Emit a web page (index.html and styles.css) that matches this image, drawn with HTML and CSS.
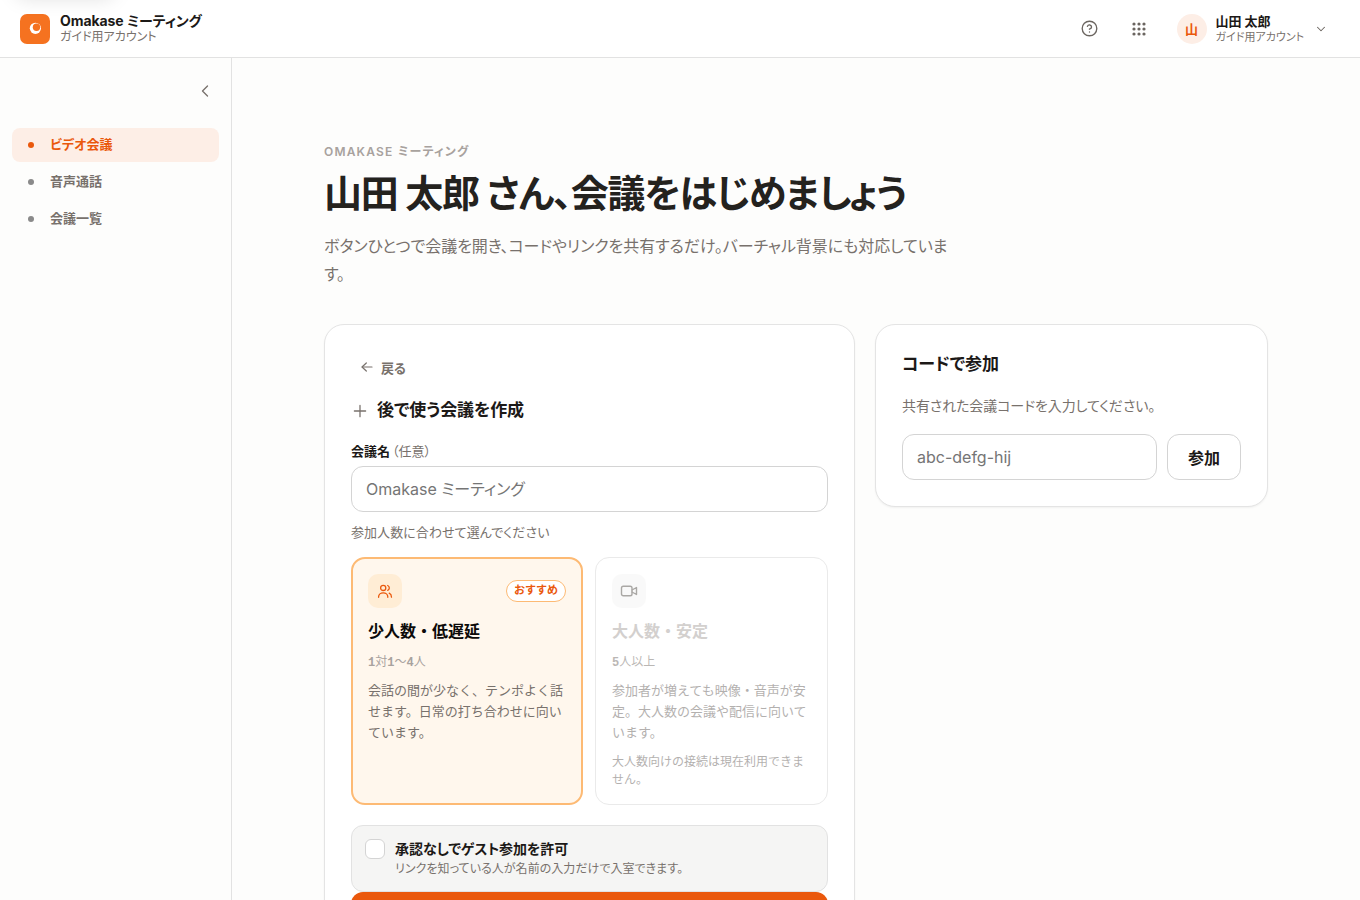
FILE: index.html
```html
<!DOCTYPE html>
<html lang="ja">
<head>
<meta charset="utf-8">
<title>Omakase ミーティング</title>
<link rel="stylesheet" href="styles.css">
</head>
<body>
<div class="app">
  <header class="topbar">
    <span class="skip-shadow"></span>
    <div class="brand">
      <svg class="brand-logo" viewBox="0 0 30 30"><rect width="30" height="30" rx="7" fill="#f57220"/><circle cx="15.4" cy="14.3" r="5.6" fill="#fff"/><circle cx="16.5" cy="13.2" r="3.7" fill="#f57220"/></svg>
      <div class="label-pair">
        <span class="label-main">Omakase ミーティング</span>
        <span class="label-sub brand-sub">ガイド用アカウント</span>
      </div>
    </div>
    <div class="tools">
      <svg class="icon-help" viewBox="0 0 24 24" fill="none" stroke="currentColor" stroke-width="1.9" stroke-linecap="round" stroke-linejoin="round"><circle cx="12" cy="12" r="10.3"/><path d="M9.09 9a3 3 0 0 1 5.83 1c0 2-3 3-3 3"/><path d="M12 17h.01"/></svg>
      <svg class="icon-grid" viewBox="0 0 14 14" fill="currentColor"><circle cx="2" cy="2" r="1.6"/><circle cx="7" cy="2" r="1.6"/><circle cx="12" cy="2" r="1.6"/><circle cx="2" cy="7" r="1.6"/><circle cx="7" cy="7" r="1.6"/><circle cx="12" cy="7" r="1.6"/><circle cx="2" cy="12" r="1.6"/><circle cx="7" cy="12" r="1.6"/><circle cx="12" cy="12" r="1.6"/></svg>
      <div class="user">
        <span class="avatar">山</span>
        <div class="label-pair user-label">
          <span class="label-main user-name">山田 太郎</span>
          <span class="label-sub">ガイド用アカウント</span>
        </div>
        <svg class="icon-down" viewBox="0 0 24 24" fill="none" stroke="currentColor" stroke-width="1.8" stroke-linecap="round" stroke-linejoin="round"><path d="m6 9 6 6 6-6"/></svg>
      </div>
    </div>
  </header>
  <div class="body">
    <aside class="sidebar">
      <svg class="icon-collapse" viewBox="0 0 24 24" fill="none" stroke="currentColor" stroke-width="1.6" stroke-linecap="round" stroke-linejoin="round"><path d="m15 18-6-6 6-6"/></svg>
      <nav class="nav">
        <a class="nav-item active"><i class="dot"></i><span class="nav-text">ビデオ会議</span></a>
        <a class="nav-item"><i class="dot"></i><span class="nav-text">音声通話</span></a>
        <a class="nav-item"><i class="dot"></i><span class="nav-text">会議一覧</span></a>
      </nav>
    </aside>
    <main class="main">
      <p class="eyebrow">Omakase ミーティング</p>
      <h1 class="title">山田 太郎 さん、会議をはじめましょう</h1>
      <p class="lead">ボタンひとつで会議を開き、コードやリンクを共有するだけ。バーチャル背景にも対応しています。</p>
      <div class="columns">
        <section class="card create">
          <a class="back"><svg class="icon-back" viewBox="0 0 24 24" fill="none" stroke="currentColor" stroke-width="1.8" stroke-linecap="round" stroke-linejoin="round"><path d="m11 18-6.500-6 6.500-6"/><path d="M19.500 12H5"/></svg>戻る</a>
          <h2 class="card-title create-title"><svg class="icon-plus" viewBox="0 0 24 24" fill="none" stroke="currentColor" stroke-width="1.7" stroke-linecap="round"><path d="M4.500 12h15M12 4.500v15"/></svg>後で使う会議を作成</h2>
          <label class="field-label">会議名<span class="optional">（任意）</span></label>
          <input class="input name-input" placeholder="Omakase ミーティング">
          <p class="hint">参加人数に合わせて選んでください</p>
          <div class="options">
            <div class="option selected">
              <div class="option-head">
                <span class="option-icon"><svg viewBox="0 0 18 18" fill="none" stroke="currentColor" stroke-width="1.3" stroke-linecap="round" stroke-linejoin="round"><circle cx="7.200" cy="5.900" r="2.600"/><path d="M2.600 15.300v-.5a4.600 4 0 0 1 9.200 0v.5"/><path d="M11.700 3.500a2.600 2.600 0 0 1 0 4.800"/><path d="M13.200 11.200c1.500.7 2.300 2 2.300 4"/></svg></span>
                <span class="badge">おすすめ</span>
              </div>
              <strong class="option-title">少人数・低遅延</strong>
              <span class="option-count"><b>1</b>対<b>1</b>〜<b>4</b>人</span>
              <span class="option-text">会話の間が少なく、テンポよく話せます。日常の打ち合わせに向いています。</span>
            </div>
            <div class="option disabled">
              <div class="option-head">
                <span class="option-icon"><svg viewBox="0 0 18 18" fill="none" stroke="currentColor" stroke-width="1.4" stroke-linecap="round" stroke-linejoin="round"><rect x="1.500" y="4.200" width="10.500" height="9.600" rx="1.800"/><path d="m12 8 4.500-2.500v7L12 10"/></svg></span>
              </div>
              <strong class="option-title">大人数・安定</strong>
              <span class="option-count"><b>5</b>人以上</span>
              <span class="option-text">参加者が増えても映像・音声が安定。大人数の会議や配信に向いています。</span>
              <span class="option-note">大人数向けの接続は現在利用できません。</span>
            </div>
          </div>
          <div class="guest">
            <span class="checkbox"></span>
            <div class="guest-copy">
              <strong class="guest-title">承認なしでゲスト参加を許可</strong>
              <span class="guest-text">リンクを知っている人が名前の入力だけで入室できます。</span>
            </div>
          </div>
          <button class="submit" aria-label="会議を作成"></button>
        </section>
        <section class="card join">
          <h2 class="card-title">コードで参加</h2>
          <p class="join-text">共有された会議コードを入力してください。</p>
          <div class="join-row">
            <input class="input" placeholder="abc-defg-hij">
            <button class="join-button">参加</button>
          </div>
        </section>
      </div>
    </main>
  </div>
</div>
</body>
</html>
```
FILE: styles.css
```css
* { box-sizing: border-box; margin: 0; padding: 0; }
body {
  font-family: Inter, "Noto Sans CJK JP", sans-serif;
  font-feature-settings: "palt";
  color: #1c1917;
  background: #fdfdfc;
}
svg { display: block; flex: none; }
input, button { font: inherit; font-feature-settings: "palt"; color: inherit; }
.app { height: 900px; overflow: hidden; display: flex; flex-direction: column; }

.topbar {
  position: relative; overflow: hidden;
  height: 58px; flex: none; padding: 0 32px 0 20px;
  display: flex; align-items: center; justify-content: space-between;
  background: #fff; border-bottom: 1px solid #e2e2e2;
}
.skip-shadow {
  position: absolute; left: 16px; top: -42px; width: 98px; height: 36px;
  border-radius: 8px; box-shadow: 0 4px 20px rgba(0, 0, 0, .13);
}
.brand { display: flex; align-items: center; gap: 10px; }
.brand-logo { width: 30px; height: 30px; }
.label-pair { display: flex; flex-direction: column; }
.label-main { font-size: 14px; font-weight: 700; line-height: 16px; letter-spacing: -.08px; }
.label-sub { font-size: 11px; line-height: 16px; color: #78716c; }
.brand-sub { font-size: 12px; }
.user-name { font-size: 13px; letter-spacing: 0; }
.tools { display: flex; align-items: center; color: #6b6560; }
.icon-help { width: 17px; height: 17px; }
.icon-grid { width: 14px; height: 14px; margin-left: 34px; }
.user { display: flex; align-items: center; margin-left: 31px; }
.avatar {
  width: 30px; height: 30px; border-radius: 50%; background: #fdeee6; color: #ea580c;
  display: flex; align-items: center; justify-content: center; font-size: 13px; font-weight: 700;
}
.user-label { margin: 0 10px 0 9px; color: #1c1917; }
.icon-down { width: 14px; height: 14px; }

.body { flex: 1; min-height: 0; display: flex; }
.sidebar { width: 232px; flex: none; padding: 23px 12px; border-right: 1px solid #e2e2e2; color: #78716c; }
.icon-collapse { width: 20px; height: 20px; margin: 0 4px 27px auto; }
.nav { display: flex; flex-direction: column; gap: 3px; }
.nav-item {
  height: 34px; padding: 0 16px; border-radius: 8px;
  display: flex; align-items: center; gap: 16px; font-size: 13px; font-weight: 600;
}
.nav-text { padding-bottom: 4px; }
.dot { width: 6px; height: 6px; border-radius: 50%; background: #8a8a8a; }
.active { background: #fdeee6; color: #ea580c; }
.active .dot { background: #ea580c; }

.main { flex: 1; padding: 85px 92px 0; }
.eyebrow { font-size: 12px; line-height: 18px; font-weight: 600; letter-spacing: 1.2px; text-transform: uppercase; color: #a8a29e; }
.title { font-size: 38px; line-height: 46px; font-weight: 700; letter-spacing: -1.25px; margin-top: 9px; color: #24221e; }
.lead { width: 640px; margin-top: 16px; font-size: 16px; line-height: 28px; letter-spacing: -.05px; color: #78716c; }
.columns { display: grid; grid-template-columns: 531px 393px; gap: 20px; align-items: start; margin-top: 36px; }
.card { padding: 26px; border: 1px solid #e4e4e4; border-radius: 20px; background: #fff; box-shadow: 0 1px 2px rgba(0, 0, 0, .05); }
.card-title { font-size: 17px; line-height: 27px; font-weight: 700; letter-spacing: -.1px; }
.back { display: flex; align-items: center; height: 32px; padding-left: 8px; gap: 6px; font-size: 13px; font-weight: 600; color: #78716c; }
.icon-back { width: 16px; height: 16px; }
.create-title { display: flex; align-items: center; gap: 8px; margin: 14px 0 17px; }
.icon-plus { width: 18px; height: 18px; color: #78716c; }
.field-label { display: block; font-size: 13px; line-height: 20px; font-weight: 700; margin-bottom: 5px; }
.optional { margin-left: 2px; font-weight: 400; color: #78716c; }
.input { width: 100%; min-width: 0; height: 46px; padding: 0 14px; border: 1px solid #d4d4d4; border-radius: 12px; background: #fff; font-size: 16px; }
.input::placeholder { color: #757575; }
.hint { margin: 10px 0 15px; font-size: 13px; line-height: 20px; letter-spacing: .06px; color: #78716c; }
.options { display: grid; grid-template-columns: 232px 233px; gap: 12px; }
.option { height: 248px; padding: 16px; border: 1px solid #d6d6d6; border-radius: 14px; display: flex; flex-direction: column; font-feature-settings: normal; }
.selected { border: 2px solid #fdba74; padding: 15px; background: #fff7ed; color: #0c0a09; }
.disabled { opacity: .5; }
.option-head { display: flex; justify-content: space-between; align-items: center; }
.option-icon { width: 34px; height: 34px; border-radius: 10px; background: #f5f5f4; color: #57534e; display: flex; align-items: center; justify-content: center; }
.option-icon svg { width: 18px; height: 18px; }
.selected .option-icon { background: #ffedd5; color: #ea580c; }
.badge { height: 22px; padding: 0 7px; border: 1px solid #fdba74; border-radius: 11px; background: #fff; color: #ea580c; font-size: 11px; line-height: 19px; font-weight: 700; }
.option-title { margin-top: 11px; font-size: 16px; line-height: 24px; font-weight: 700; }
.disabled .option-title { color: #a8a29e; }
.option-count { margin-top: 10px; font-size: 12px; line-height: 18px; color: #a8a29e; }
.option-count b { font-family: "Liberation Mono", monospace; }
.disabled .option-count { color: #78716c; }
.option-text { margin-top: 8px; font-size: 13px; line-height: 21px; color: #78716c; }
.option-note { margin-top: 10px; font-size: 12px; line-height: 18px; color: #78716c; }
.disabled .option-text, .disabled .option-note { color: #6a645f; }
.guest { height: 67px; margin-top: 20px; padding: 13px; display: flex; gap: 10px; border: 1px solid #e2e2e2; border-radius: 12px; background: #f5f5f4; }
.checkbox { width: 20px; height: 20px; flex: none; border: 1px solid #d4d4d4; border-radius: 6px; background: #fff; }
.guest-copy { display: flex; flex-direction: column; }
.guest-title { font-size: 14px; line-height: 20px; letter-spacing: -.06px; }
.guest-text { font-size: 12px; line-height: 19px; letter-spacing: .04px; color: #78716c; }
.submit { width: 100%; height: 48px; border: 0; border-radius: 12px; background: #ea580c; display: block; }
.join { height: 183px; }
.join-text { margin: 17px 0; font-size: 14px; line-height: 22px; letter-spacing: -.1px; color: #78716c; }
.join-row { display: grid; grid-template-columns: 1fr 74px; gap: 10px; }
.join-button { height: 46px; border: 1px solid #d4d4d4; border-radius: 12px; background: #fff; font-size: 16px; font-weight: 600; }
```
